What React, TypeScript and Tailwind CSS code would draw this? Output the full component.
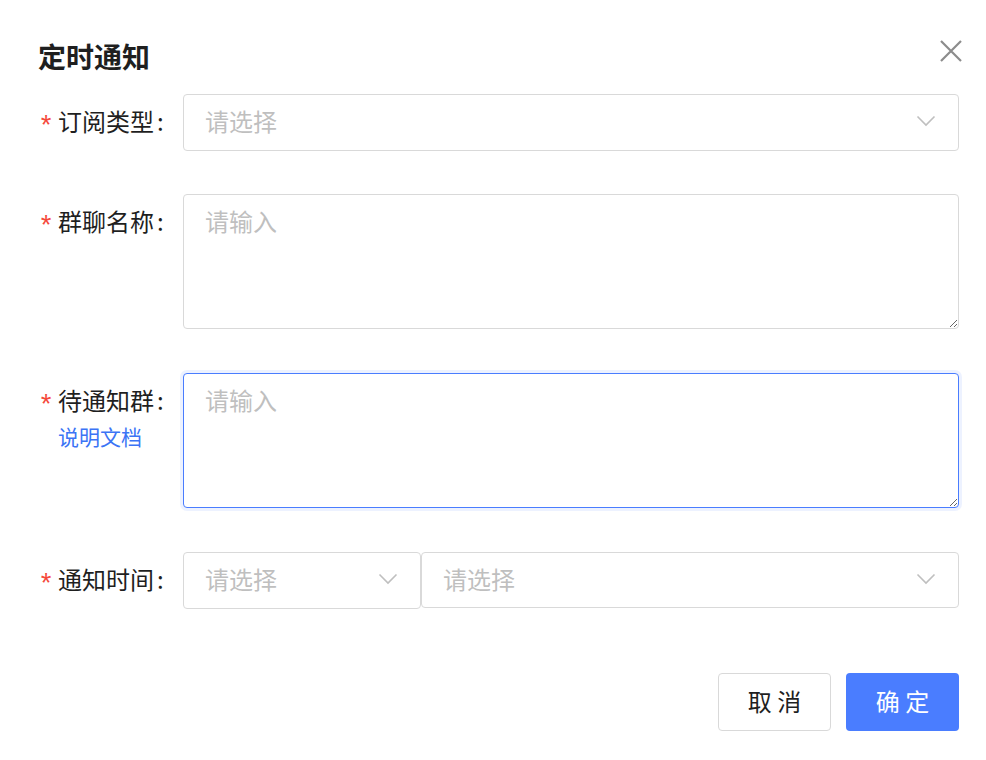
import React from "react";

/**
 * 定时通知 · 订阅设置弹窗（静态还原）。
 * 尺寸约为 14px 设计稿 × 1.75。
 */

const FONT = { fontFamily: '"Noto Sans CJK SC", "Noto Sans", sans-serif' };

function Chevron() {
  return (
    <svg width="20" height="12" viewBox="0 0 20 12" fill="none" className="shrink-0">
      <path d="M1.5 1.5 L10 10 L18.5 1.5" stroke="#bfbfbf" strokeWidth="1.6" />
    </svg>
  );
}

function CloseIcon() {
  return (
    <svg width="24" height="24" viewBox="0 0 24 24" fill="none">
      <path d="M2 2 L22 22 M22 2 L2 22" stroke="#8c8c8c" strokeWidth="2.2" />
    </svg>
  );
}

function Label({ text, extra }: { text: string; extra?: React.ReactNode }) {
  return (
    <div className="w-[145px] shrink-0 flex items-start pt-[9px]">
      <span
        className="w-[20px] mt-[8px] text-[27px] leading-[34px] text-[#f5483b]"
        style={{ fontFamily: '"Liberation Mono", monospace' }}
      >
        *
      </span>
      <div className="flex flex-col">
        <span className="text-[24px] leading-[36px] text-[#1f1f1f] whitespace-nowrap">
          {text}
          <span className="ml-[3px]">:</span>
        </span>
        {extra}
      </div>
    </div>
  );
}

function Select({ className = "", h = "h-[57px]" }: { className?: string; h?: string }) {
  return (
    <div
      className={`${h} border border-[#d9d9d9] rounded-[4px] bg-white flex items-center justify-between pl-[21px] pr-[22px] pb-[3px] ${className}`}
    >
      <span className="text-[24px] text-[#bfbfbf]">请选择</span>
      <Chevron />
    </div>
  );
}

function TextArea({ focused = false }: { focused?: boolean }) {
  return (
    <textarea
      placeholder="请输入"
      style={FONT}
      className={`flex-1 h-[135px] rounded-[4px] border bg-white px-[21px] pt-[7px] text-[24px] leading-[38px] text-[#262626] placeholder:text-[#bfbfbf] outline-none ${
        focused
          ? "border-[#4a7dff] shadow-[0_0_0_3px_rgba(74,125,255,0.1)]"
          : "border-[#d9d9d9]"
      }`}
    />
  );
}

export default function App() {
  return (
    <div className="relative w-[986px] h-[760px] bg-white" style={FONT}>
      <button className="absolute left-[939px] top-[39px]">
        <CloseIcon />
      </button>

      <div className="pl-[38px] pr-[27px] pt-[36px]">
        <h2 className="text-[28px] leading-[40px] font-bold text-[#1f1f1f]">定时通知</h2>

        <div className="mt-[18px] flex flex-col gap-[44px]">
          <div className="flex">
            <Label text="订阅类型" />
            <Select className="flex-1" h="h-[57px]" />
          </div>

          <div className="flex -mt-[1px]">
            <Label text="群聊名称" />
            <TextArea />
          </div>

          <div className="flex">
            <Label
              text="待通知群"
              extra={
                <a className="mt-[3px] text-[21px] leading-[30px] text-[#3b74f5] cursor-pointer">
                  说明文档
                </a>
              }
            />
            <TextArea focused />
          </div>

          <div className="flex">
            <Label text="通知时间" />
            <Select className="w-[238px] shrink-0" />
            <Select className="flex-1" h="h-[56px]" />
          </div>
        </div>

        <div className="mt-[64px] flex justify-end gap-[15px]">
          <button className="w-[113px] h-[58px] rounded-[4px] border border-[#d9d9d9] bg-white text-[24px] text-[#1f1f1f] pb-[2px]">
            取 消
          </button>
          <button className="w-[113px] h-[58px] rounded-[4px] bg-[#4a7dff] text-[24px] text-white pb-[2px]">
            确 定
          </button>
        </div>
      </div>
    </div>
  );
}
